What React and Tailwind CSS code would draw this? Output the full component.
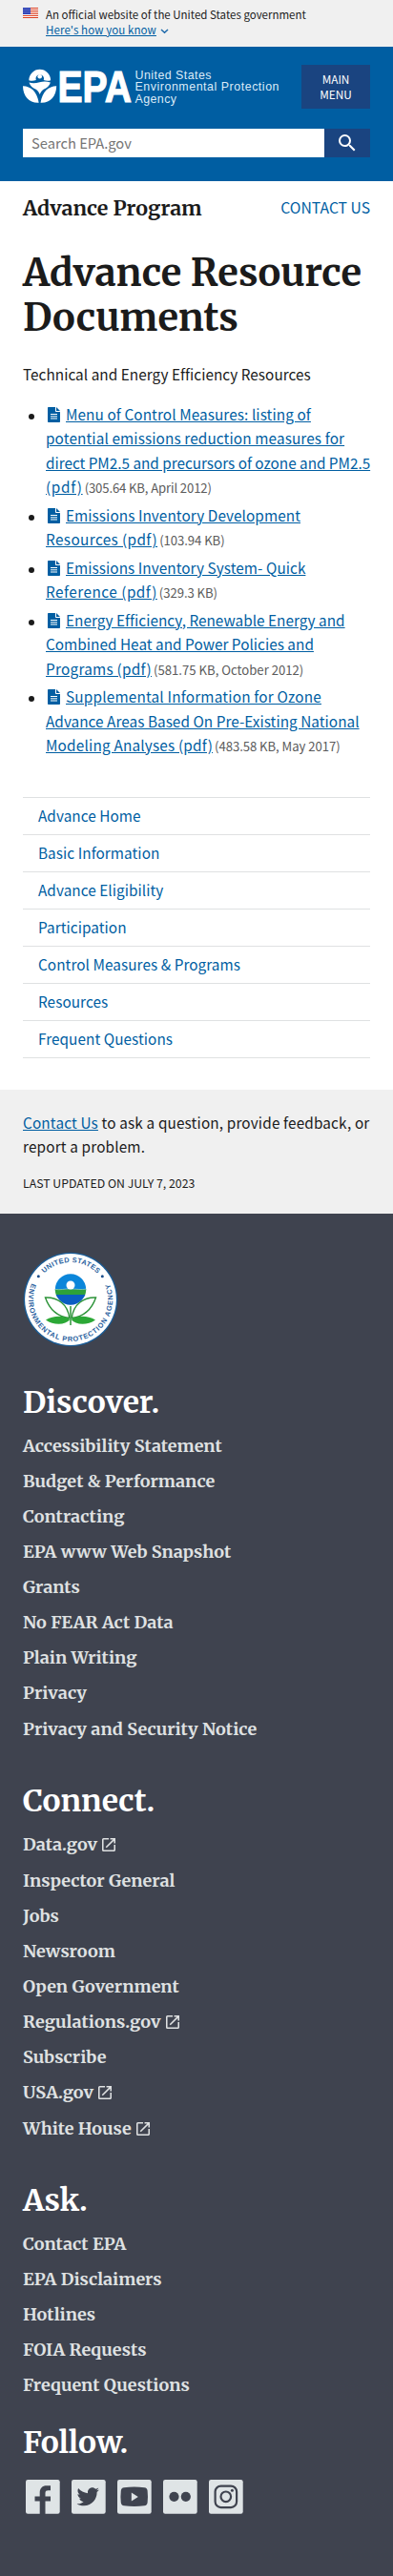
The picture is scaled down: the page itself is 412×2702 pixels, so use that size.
import { FaTwitter } from 'react-icons/fa';
import { MdSearch } from 'react-icons/md';

// Each title is split into its lines, with the letter spacing of every line.
const documents = [
  {
    lines: [
      ['Menu of Control Measures: listing of', 'tracking-[0.1px]'],
      ['potential emissions reduction measures for', 'tracking-[0.13px]'],
      ['direct PM2.5 and precursors of ozone and PM2.5', 'tracking-[-0.01px]'],
      ['(pdf)', 'tracking-[0.7px]'],
    ],
    meta: '(305.64 KB, April 2012)',
    metaTracking: 'tracking-[-0.14px]',
  },
  {
    lines: [
      ['Emissions Inventory Development', 'tracking-[0.08px]'],
      ['Resources (pdf)', 'tracking-[0.4px]'],
    ],
    meta: '(103.94 KB)',
    metaTracking: 'tracking-[-0.06px]',
  },
  {
    lines: [
      ['Emissions Inventory System- Quick', 'tracking-[0.07px]'],
      ['Reference (pdf)', 'tracking-[0.5px]'],
    ],
    meta: '(329.3 KB)',
    metaTracking: 'tracking-[-0.06px]',
  },
  {
    lines: [
      ['Energy Efficiency, Renewable Energy and', 'tracking-[0.03px]'],
      ['Combined Heat and Power Policies and', 'tracking-[0.04px]'],
      ['Programs (pdf)', 'tracking-[0.26px]'],
    ],
    meta: '(581.75 KB, October 2012)',
    metaTracking: 'tracking-[0px]',
  },
  {
    lines: [
      ['Supplemental Information for Ozone', 'tracking-[0.2px]'],
      ['Advance Areas Based On Pre-Existing National', 'tracking-[0.05px]'],
      ['Modeling Analyses (pdf)', 'tracking-[0.2px]'],
    ],
    meta: '(483.58 KB, May 2017)',
    metaTracking: 'tracking-[-0.06px]',
  },
];

const sections = [
  'Advance Home',
  'Basic Information',
  'Advance Eligibility',
  'Participation',
  'Control Measures & Programs',
  'Resources',
  'Frequent Questions',
];

const discover = [
  'Accessibility Statement',
  'Budget & Performance',
  'Contracting',
  'EPA www Web Snapshot',
  'Grants',
  'No FEAR Act Data',
  'Plain Writing',
  'Privacy',
  'Privacy and Security Notice',
];

const connect = [
  'Data.gov',
  'Inspector General',
  'Jobs',
  'Newsroom',
  'Open Government',
  'Regulations.gov',
  'Subscribe',
  'USA.gov',
  'White House',
];

const external = ['Data.gov', 'Regulations.gov', 'USA.gov', 'White House'];

const ask = ['Contact EPA', 'EPA Disclaimers', 'Hotlines', 'FOIA Requests', 'Frequent Questions'];

function Flag() {
  return (
    <svg width="16" height="11" viewBox="0 0 16 11" className="mt-px block shrink-0">
      <rect width="16" height="11" fill="#fff" />
      {[0, 2, 4, 6, 8, 10].map((y) => (
        <rect key={y} y={y} width="16" height="1" fill="#db3e1f" />
      ))}
      <rect width="8" height="7" fill="#1e33b1" />
      {[1, 3, 5].map((y) =>
        [1, 3, 5, 7].map((x) => <rect key={`${x}-${y}`} x={x - 0.4} y={y - 0.1} width="0.8" height="0.8" fill="#fff" />)
      )}
    </svg>
  );
}

function Logo() {
  return (
    <svg width="272" height="38" viewBox="0 0 272 38" className="block shrink-0 overflow-visible" fill="#fff">
      <path d="M6.300 12.200a11.400 11.400 0 0 1 22.800 0c-3 .9-4.700 .6-7.300-.2a4.300 4.300 0 1 0-8 .1c-2.700 .8-4.800 .9-7.500 .1z" />
      <circle cx="17.700" cy="8.200" r="2.300" />
      <path d="M6.500 14.600c3.500 1 7 .8 11-.3 4-1 7.700-.9 11.400.3a11.400 11.400 0 0 1-7.200 7.200c-1.800 1.300-3.200 3-4 5.200-.8-2.200-2.200-3.900-4-5.200a11.400 11.400 0 0 1-7.200-7.200z" />
      <path d="M0 18.300c8.500.3 14.500 5.500 16.700 17.400C6.800 36.300.2 29.500 0 18.300z" />
      <path d="M35.200 18.300c-8.500.3-14.500 5.500-16.700 17.400 9.900.6 16.500-6.200 16.700-17.400z" />
      <text x="36.500" y="35" fontFamily="Liberation Sans, Arial, sans-serif" fontWeight="700" fontSize="47" textLength="77.500" lengthAdjust="spacingAndGlyphs" stroke="#fff" strokeWidth="1.200">
        EPA
      </text>
      <g fontFamily="Liberation Sans, Arial, sans-serif" fontSize="12.400" fill="#dcebf8">
        <text x="117.500" y="10.700" textLength="80" lengthAdjust="spacing">United States</text>
        <text x="117.500" y="23.200" textLength="151" lengthAdjust="spacing">Environmental Protection</text>
        <text x="117.500" y="36" textLength="43.500" lengthAdjust="spacing">Agency</text>
      </g>
    </svg>
  );
}

function FileIcon() {
  return (
    <svg width="13" height="16" viewBox="0 0 13 16" className="mr-[6px] ml-[2px] inline-block align-[-2px]">
      <path fill="#005ea2" d="M.8 0H8v4.200c0 .5.300.8.800.8H13v10.200c0 .5-.300.8-.800.8H.8c-.500 0-.800-.300-.800-.8V.8C0 .3.300 0 .8 0z" />
      <path fill="#005ea2" d="M9 0l4 4H9z" />
      <path stroke="#fff" strokeWidth="1" d="M3 7.500h7M3 9.800h7M3 12h7" />
    </svg>
  );
}

function ExternalIcon() {
  return (
    <svg width="14" height="14" viewBox="3 3 18 18" className="ml-[5px] inline-block align-[-1px]" fill="#dfe1e2">
      <path d="M19 19H5V5h7V3H5a2 2 0 0 0-2 2v14a2 2 0 0 0 2 2h14c1.100 0 2-.9 2-2v-7h-2v7zM14 3v2h3.590l-9.830 9.830 1.410 1.410L19 6.410V10h2V3h-7z" />
    </svg>
  );
}

function Seal() {
  return (
    <svg width="100" height="100" viewBox="0 0 100 100" className="mt-10 block">
      <defs>
        <path id="seal-top" d="M11 50a39 39 0 0 1 78 0" />
        <path id="seal-bottom" d="M9.200 33.200a44.100 44.100 0 1 0 81.600 0" />
        <clipPath id="seal-ball">
          <circle cx="50" cy="39.500" r="16.200" />
        </clipPath>
      </defs>
      <circle cx="50" cy="50" r="49.300" fill="#1a5c96" />
      <circle cx="50" cy="50" r="47.900" fill="#fff" />
      <g fontFamily="Liberation Sans, Arial, sans-serif" fontWeight="700" fontSize="7.400" fill="#2a5f9e">
        <text>
          <textPath href="#seal-top" startOffset="30.500" textLength="62">UNITED STATES</textPath>
        </text>
        <text>
          <textPath href="#seal-bottom" startOffset="0" textLength="172">ENVIRONMENTAL PROTECTION AGENCY</textPath>
        </text>
      </g>
      <circle cx="16.300" cy="25.700" r="1.500" fill="#1b4e8c" />
      <circle cx="83.300" cy="25.700" r="1.500" fill="#1b4e8c" />
      <g clipPath="url(#seal-ball)">
        <rect x="30" y="20" width="40" height="22" fill="#0b86da" />
        <rect x="30" y="39.300" width="40" height="7" fill="#2ea13a" />
        <rect x="30" y="45" width="40" height="14" fill="#0a5dc2" />
        <path d="M33 39.200c6 1.500 11-.6 17-.4s11 1.500 17 .2" fill="none" stroke="#cfe8f5" strokeWidth=".5" />
      </g>
      <circle cx="50" cy="35" r="4.500" fill="#fff" />
      <g fill="#fff" stroke="#2c9338" strokeWidth="1.400">
        <path d="M48.800 69.500C36 68 28 61 23.500 48c12.500-.5 23.500 6.500 25.300 21.500z" />
        <path d="M51.200 69.500C64 68 72 61 76.500 48c-12.500-.5-23.500 6.500-25.300 21.500z" />
      </g>
      <path d="M24 71.500c8-4.500 18-5 25.500-.5-5 6-17 6.500-25.500.5zM76 71.500c-8-4.500-18-5-25.500-.5 5 6 17 6.500 25.500.5z" fill="#2ca836" />
      <path d="M50 57v20" stroke="#2c9338" strokeWidth="1.500" />
    </svg>
  );
}

function FooterHeading({ children, className }) {
  return <h2 className={`text-[31.8px] leading-10 font-bold text-white ${className}`}>{children}</h2>;
}

function FooterLinks({ items }) {
  return (
    <ul className="mt-[7px]">
      {items.map((item) => (
        <li key={item} className="h-[37.15px] text-[18px] leading-[37.15px] font-bold tracking-[0.05px] text-[#dfe1e2]">
          {item}
          {external.includes(item) && <ExternalIcon />}
        </li>
      ))}
    </ul>
  );
}

function Tile({ children }) {
  return (
    <svg width="36" height="36" viewBox="0 0 36 36" className="block">
      <rect width="35.700" height="35.700" rx="2.200" fill="#dfe4e6" />
      {children}
    </svg>
  );
}

function Social() {
  return (
    <div className="mt-[19px] ml-[2.5px] flex gap-3">
      <Tile>
        <path fill="#3f434f" d="M14.700 36V22.500H9.500v-5h5.200v-4c0-4.500 2.800-7.200 7-7.200H26v5h-2.500c-2 0-3 .7-3 2.600v3.600H26v5h-5.500V36z" />
      </Tile>
      <Tile>
        <FaTwitter x="5.500" y="6" size={23.500} color="#3f434f" />
      </Tile>
      <Tile>
        <path fill="#3f434f" d="M7 8.200q10.700-1.200 21.400 0 2.900.4 3.200 3.300.7 6.200 0 12.500-.3 2.900-3.200 3.300-10.700 1.200-21.400 0-2.900-.4-3.200-3.300-.7-6.200 0-12.500.3-2.900 3.200-3.300z" />
        <path fill="#dfe4e6" d="M14.800 13.500v9l7-4.500z" />
      </Tile>
      <Tile>
        <circle cx="11.500" cy="17.800" r="5.100" fill="#3f434f" />
        <circle cx="23.800" cy="17.800" r="5.100" fill="#3f434f" />
      </Tile>
      <Tile>
        <g fill="none" stroke="#3f434f" strokeWidth="2.200">
          <rect x="6.600" y="6.600" width="22.500" height="22.500" rx="6" />
          <circle cx="17.800" cy="17.800" r="5.300" />
        </g>
        <circle cx="24.400" cy="11.300" r="1.500" fill="#3f434f" />
      </Tile>
    </div>
  );
}

function DocumentItem({ doc }) {
  return (
    <li className="-mr-2 flex leading-[25.5px]">
      <span className="mt-[12px] ml-[6px] block size-[6px] shrink-0 rounded-full bg-[#1b1b1b]" />
      <div className="ml-3 whitespace-nowrap">
        {doc.lines.map(([text, tracking], i) => (
          <div key={text} className="h-[25.5px]">
            {i === 0 && <FileIcon />}
            <a className={`text-[#005ea2] underline underline-offset-[1px] ${tracking}`}>{text}</a>
            {i === doc.lines.length - 1 && (
              <span className={`ml-[2px] text-[13.15px] leading-none text-[#5b5b5b] ${doc.metaTracking}`}>{doc.meta}</span>
            )}
          </div>
        ))}
      </div>
    </li>
  );
}

export default function App() {
  return (
    <div className="min-h-[2702px] w-full bg-white font-['Noto_Sans_CJK_SC','Noto_Sans',sans-serif] text-[15.3px] text-[#1b1b1b]">
      <div className="flex h-[49px] gap-2 bg-[#f0f0f0] px-6 pt-[7px] text-[11.5px] leading-4">
        <Flag />
        <div>
          <p>An official website of the United States government</p>
          <p className="flex items-center text-[#005ea2]">
            <span className="tracking-[0.1px] underline underline-offset-[1px]">Here's how you know</span>
            <svg width="9" height="6" viewBox="0 0 9 6" className="mt-[3px] ml-1" fill="none" stroke="#1f6aab" strokeWidth="1.500">
              <path d="M1 1l3.500 3.300L8 1" />
            </svg>
          </p>
        </div>
      </div>

      <header className="h-[141px] bg-[#005ea2] px-6 pt-[19px]">
        <div className="flex items-center justify-between">
          <Logo />
          <button className="h-[46px] w-[72px] bg-[#1a4480] text-center text-[11.8px] leading-4 text-white">
            MAIN
            <br />
            MENU
          </button>
        </div>
        <div className="mt-[21px] flex h-[30px]">
          <div className="flex-1 bg-white pl-[9px] text-[14.7px] leading-[30px] text-[#757575]">Search EPA.gov</div>
          <button className="flex w-12 items-center justify-center bg-[#1a4480] text-white">
            <MdSearch size={24} />
          </button>
        </div>
      </header>

      <main className="px-6 pt-[14px]">
        <div className="flex items-start justify-between">
          <div className="font-['Merriweather','DejaVu_Serif_Condensed',serif] text-[21.4px] leading-[29px] font-bold">Advance Program</div>
          <a className="text-[15.7px] leading-[27px] text-[#005ea2]">CONTACT US</a>
        </div>
        <h1 className="mt-[30px] font-['Merriweather','DejaVu_Serif_Condensed',serif] text-[39.8px] leading-[47px] font-bold">
          Advance Resource
          <br />
          Documents
        </h1>
        <p className="mt-[22.5px] leading-[25.5px] tracking-[0.05px]">Technical and Energy Efficiency Resources</p>
        <ul className="mt-[16.5px] flex flex-col gap-1">
          {documents.map((doc) => (
            <DocumentItem key={doc.meta} doc={doc} />
          ))}
        </ul>
        <nav className="mt-[41.5px] border-b border-[#dfe1e2]">
          {sections.map((item) => (
            <a key={item} className="block h-[39px] border-t border-[#dfe1e2] pl-4 leading-[37px] tracking-[0.07px] text-[#005ea2]">
              {item}
            </a>
          ))}
        </nav>
      </main>

      <div className="mt-[33px] h-[130px] bg-[#f0f0f0] pt-[21.5px] pl-6">
        <p className="leading-[25.5px] tracking-[0.16px] whitespace-nowrap">
          <a className="text-[#005ea2] underline underline-offset-[1px]">Contact Us</a> to ask a question, provide feedback, or
          <br />
          report a problem.
        </p>
        <p className="mt-4 text-[12.3px] leading-[18px]">LAST UPDATED ON JULY 7, 2023</p>
      </div>

      <footer className="h-[1429px] overflow-hidden bg-[#3f434f] px-6 font-['Merriweather','DejaVu_Serif_Condensed',serif]">
        <Seal />
        <FooterHeading className="mt-[37.5px]">Discover.</FooterHeading>
        <FooterLinks items={discover} />
        <FooterHeading className="mt-[37.7px]">Connect.</FooterHeading>
        <FooterLinks items={connect} />
        <FooterHeading className="mt-[37.2px]">Ask.</FooterHeading>
        <FooterLinks items={ask} />
        <FooterHeading className="mt-[21px]">Follow.</FooterHeading>
        <Social />
      </footer>
    </div>
  );
}
